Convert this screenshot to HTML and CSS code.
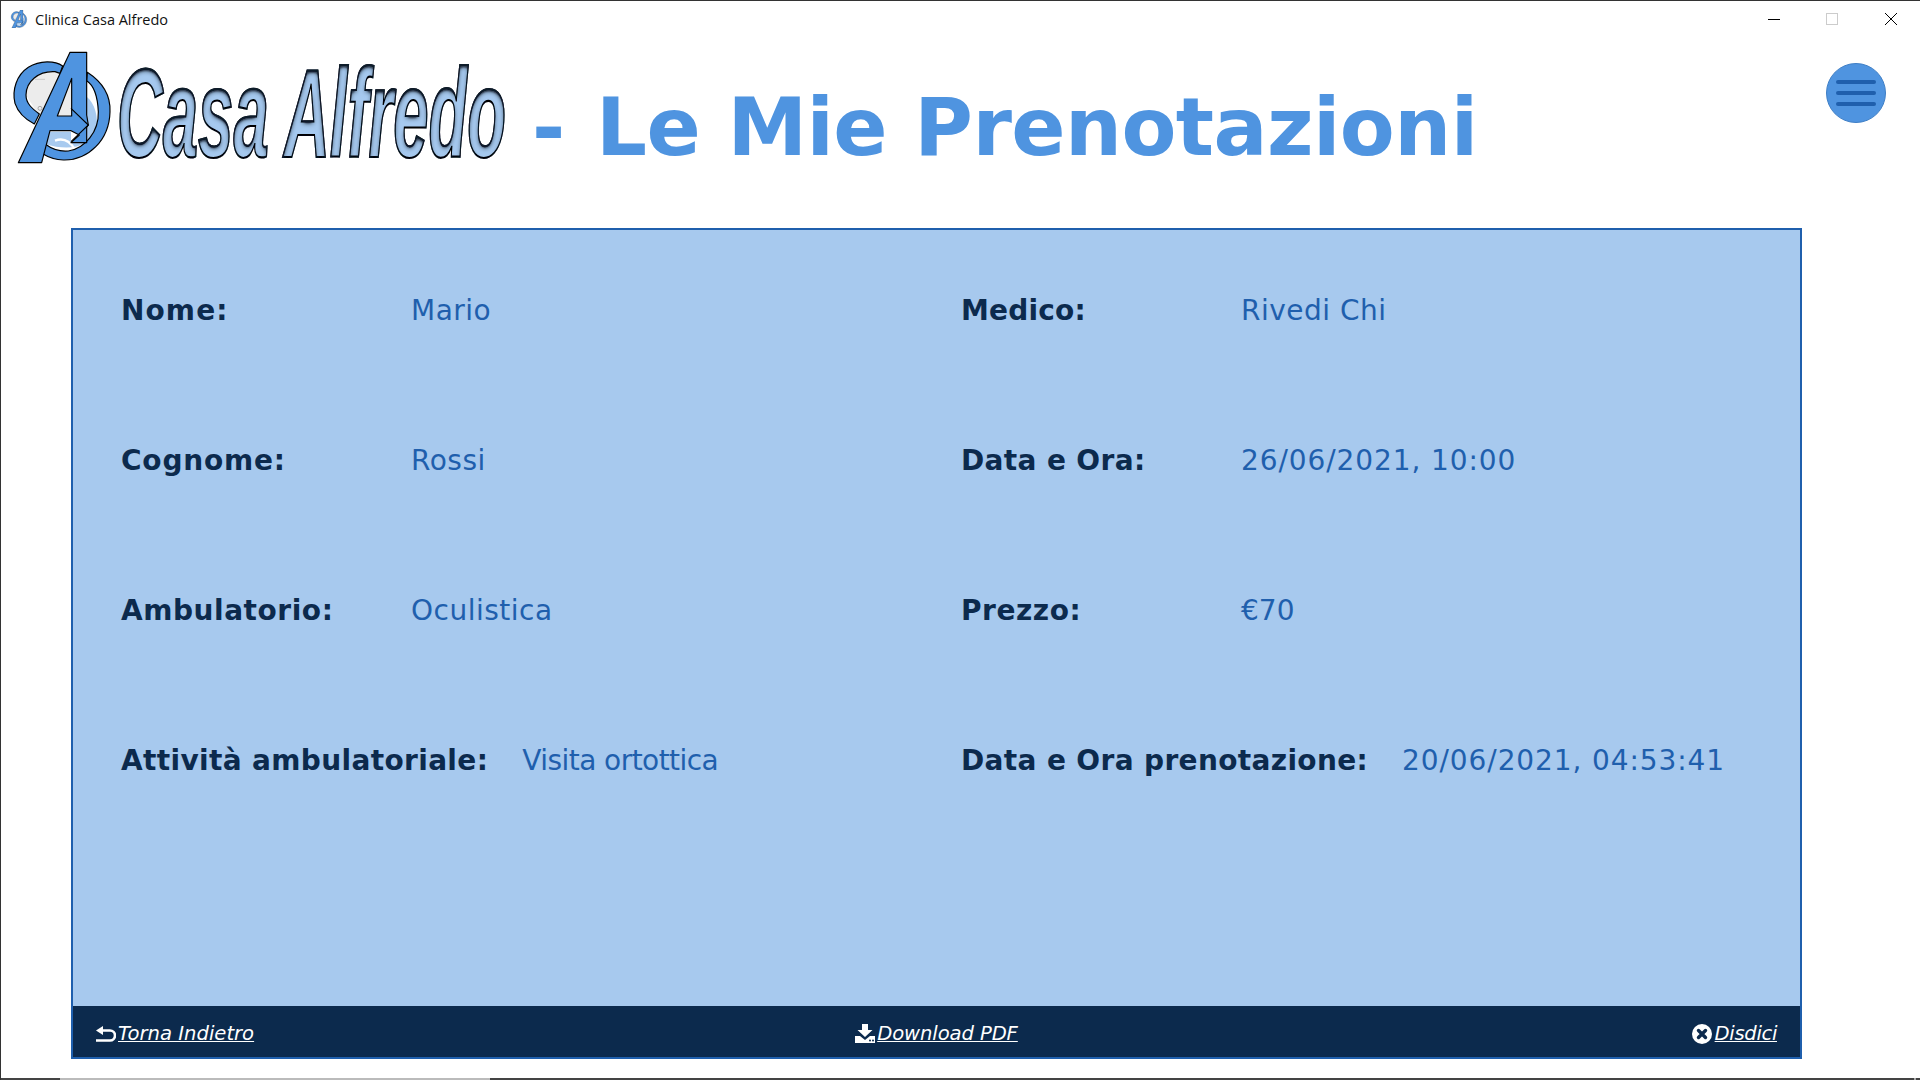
FILE: index.html
```html
<!DOCTYPE html>
<html lang="it">
<head>
<meta charset="utf-8">
<title>Clinica Casa Alfredo</title>
<link rel="stylesheet" href="styles.css">
</head>
<body>
<div class="window">
  <div class="titlebar">
    <div class="title-left">
      <svg class="app-icon" viewBox="42 37 290 333"><use href="#logo-mark" width="390" height="390"/></svg>
      <span class="app-name">Clinica Casa Alfredo</span>
    </div>
    <div class="win-controls">
      <span class="win-btn"><svg width="14" height="14" viewBox="0 0 14 14"><path d="M1 7.5h12" stroke="#000" fill="none"/></svg></span>
      <span class="win-btn"><svg width="14" height="14" viewBox="0 0 14 14"><rect x="1.5" y="1.5" width="11" height="11" stroke="#ccc" fill="none"/></svg></span>
      <span class="win-btn"><svg width="14" height="14" viewBox="0 0 14 14"><path d="M1 1l12 12M13 1L1 13" stroke="#000" fill="none"/></svg></span>
    </div>
  </div>

  <header class="page-header">
    <svg class="logo" viewBox="0 0 510 150" width="510" height="150">
      <defs>
        <filter id="bevel" x="-5%" y="-10%" width="110%" height="120%">
          <feGaussianBlur in="SourceAlpha" stdDeviation="2.800" result="blur"/>
          <feOffset in="blur" dy="2.500" result="off"/>
          <feComponentTransfer in="off" result="inv"><feFuncA type="table" tableValues="1 1 .85 .35 0"/></feComponentTransfer>
          <feFlood flood-color="#0a1a2c" result="ink"/>
          <feComposite in="ink" in2="inv" operator="in" result="shade"/>
          <feComposite in="shade" in2="SourceAlpha" operator="in" result="inner"/>
          <feMerge><feMergeNode in="SourceGraphic"/><feMergeNode in="inner"/></feMerge>
        </filter>
        <symbol id="logo-mark" viewBox="0 0 390 390">
          <path d="M78 165C78 125 115 92 165 95L190 105L215 120V240L120 232Z" fill="#ececec"/>
          <path d="M260 170C285 190 295 230 290 270C270 320 210 335 135 312L150 275H213V308H260Z" fill="#a8caef"/>
          <path d="M165 302q35-14 60 26M235 190q25 20 10 45" stroke="#fff" stroke-width="7" fill="none"/>
          <circle cx="120" cy="205" r="6" fill="none" stroke="#888" stroke-width="2"/>
          <path d="M105 118h30" stroke="#bbb" stroke-width="2"/>
          <path d="M188 78C165 62 120 60 85 82C50 105 35 150 45 190C55 220 80 240 103 252L118 222C95 205 78 190 78 165C78 125 115 92 165 95L180 100Z" fill="#4f94e0" stroke="#000" stroke-width="3.500" stroke-linejoin="round"/>
          <path d="M262 97C305 125 332 165 330 215C328 300 265 362 190 360C165 360 145 352 125 340L135 312C160 330 185 335 205 333C255 325 297 275 295 215C293 170 280 135 260 122Z" fill="#4f94e0" stroke="#000" stroke-width="3.500" stroke-linejoin="round"/>
          <path d="M210 37H260V225L265 255L260 262V308H213L238 285L213 272H150L125 368H55ZM215 115L172 228H215Z" fill="#4f94e0" fill-rule="evenodd" stroke="#000" stroke-width="3.500" stroke-linejoin="round"/>
          <path d="M213 205L265 255L213 305" fill="none" stroke="#000" stroke-width="3.500"/>
        </symbol>
      </defs>
      <use href="#logo-mark" x="-1" y="3" width="130" height="130"/>
      <g filter="url(#bevel)">
        <text class="word" transform="translate(116 120) scale(.835 1.65)">Casa Alfredo</text>
      </g>
    </svg>
    <h1 class="page-title"><span class="title-dash">-</span> Le Mie Prenotazioni</h1>
    <button class="menu-btn" aria-label="Menu"><i></i><i></i><i></i></button>
  </header>

  <main class="card">
    <div class="fields">
      <div class="field field-left"><b class="lab-a">Nome:</b><span>Mario</span></div>
      <div class="field field-right"><b class="lab-d">Medico:</b><span>Rivedi Chi</span></div>
      <div class="field field-left"><b class="lab-b">Cognome:</b><span>Rossi</span></div>
      <div class="field field-right"><b>Data e Ora:</b><span class="val-wide">26/06/2021, 10:00</span></div>
      <div class="field field-left"><b class="lab-c">Ambulatorio:</b><span>Oculistica</span></div>
      <div class="field field-right"><b class="lab-c">Prezzo:</b><span class="val-plain">€70</span></div>
      <div class="field field-left auto"><b>Attività ambulatoriale:</b><span class="val-tight">Visita ortottica</span></div>
      <div class="field field-right auto"><b>Data e Ora prenotazione:</b><span class="val-wide">20/06/2021, 04:53:41</span></div>
    </div>
    <footer class="card-footer">
      <a class="action action-start" href="#"><svg viewBox="0 0 20 16" width="20" height="16"><path d="M0 4.500L7 0V9Z" fill="#fff"/><path d="M6 4.500H14a4.500 4.500 0 0 1 0 10H0" fill="none" stroke="#fff" stroke-width="2.600"/></svg><u>Torna Indietro</u></a>
      <a class="action action-mid" href="#"><svg viewBox="0 0 20 19" width="20" height="19"><path d="M7 0h6v6h4.500L10 13 2.500 6H7Z" fill="#fff"/><path d="M0 12h5l5 4 5-4h5v7H0Z" fill="#fff"/><circle cx="15" cy="16.500" r="1" fill="#0c2a4d"/><circle cx="18" cy="16.500" r="1" fill="#0c2a4d"/></svg><u>Download PDF</u></a>
      <a class="action action-end" href="#"><svg viewBox="0 0 20 20" width="20" height="20"><circle cx="10" cy="10" r="10" fill="#fff"/><path d="M6.500 6.500l7 7M13.500 6.500l-7 7" stroke="#0c2a4d" stroke-width="3.400" stroke-linecap="round"/></svg><u>Disdici</u></a>
    </footer>
  </main>
  <div class="bottom-edge"><i></i></div>
</div>
</body>
</html>
```
FILE: styles.css
```css
* { box-sizing: border-box; }
html, body { margin: 0; height: 100%; background: #fff; }
.window {
  width: 1920px; height: 1080px; display: flex; flex-direction: column; overflow: hidden;
  border-top: 1px solid #333; border-left: 1px solid #333;
  font-family: "DejaVu Sans", sans-serif;
}
.titlebar { height: 36px; display: flex; justify-content: space-between; align-items: center; flex: none; }
.title-left { display: flex; align-items: center; padding-left: 9px; gap: 7px; }
.app-icon { width: 18px; height: 18px; }
.app-name { font: 14.500px "Open Sans", sans-serif; color: #111; }
.win-controls { display: flex; }
.win-btn { width: 58.500px; height: 36px; display: flex; align-items: center; justify-content: center; }
.page-header { height: 191px; flex: none; display: flex; position: relative; align-items: flex-start; }
.logo { flex: none; overflow: visible; }
.word { font: italic 700 76px "Liberation Sans", sans-serif; fill: #a6c9ef; stroke: #000; stroke-width: 1.300; }
.page-title { margin: 46px 0 0 21px; font-size: 80px; line-height: 90px; font-weight: 700; color: #4f94e0; white-space: nowrap; letter-spacing: -.55px; }
.title-dash { margin-right: 4px; }
.menu-btn {
  position: absolute; right: 34px; top: 26px; width: 60px; height: 60px; border-radius: 50%;
  background: #4f94e0; border: 1px solid #3f7fc6; padding: 0; display: flex; flex-direction: column; gap: 7px; align-items: center; justify-content: center;
}
.menu-btn i { width: 40px; height: 4px; border-radius: 2px; background: #1f5fad; display: block; }
.card {
  margin-left: 70px; width: 1731px; height: 831px; flex: none;
  background: #a7c9ee; border: 2px solid #1f5fad;
  display: flex; flex-direction: column;
}
.fields {
  flex: 1; display: grid; grid-template-columns: 840px 1fr; grid-auto-rows: 150px;
  padding: 5px 0 0 48px; align-content: start;
}
.field { display: flex; align-items: center; font-size: 28px; }
.field b { color: #0c2a4d; font-weight: 700; width: 290px; flex: none; white-space: nowrap; letter-spacing: .35px; }
.field b.lab-a { letter-spacing: 1.1px; }
.field b.lab-b { letter-spacing: .8px; }
.field b.lab-c { letter-spacing: .55px; }
.field b.lab-d { letter-spacing: .18px; }
.field-right b { width: 280px; }
.field span { color: #1f5fad; white-space: nowrap; letter-spacing: .5px; }
.field span.val-wide { letter-spacing: .9px; }
.field span.val-tight { letter-spacing: -.55px; }
.field span.val-plain { letter-spacing: 0; }
.field.auto b { width: auto; margin-right: 34px; }
.card-footer {
  height: 51px; flex: none; background: #0c2a4d; display: grid; grid-template-columns: 1fr auto 1fr; align-items: center; padding: 4px 23px 0;
}
.action { display: flex; align-items: center; gap: 2px; color: #fff; font-size: 19.600px; font-style: italic; text-decoration: none; }
.action-start { justify-self: start; }
.action-mid { letter-spacing: -.1px; }
.action-end { justify-self: end; gap: 3px; letter-spacing: -.35px; }
.bottom-edge { flex: 1; display: flex; align-items: flex-end; margin-left: -1px; }
.bottom-edge i { display: block; height: 2px; width: 100%; background: linear-gradient(to right, #444 60px, #bbb 60px, #bbb 490px, #444 490px, #444 1914px, #aaa 1914px, #aaa 1916px, #444 1916px); }
```
